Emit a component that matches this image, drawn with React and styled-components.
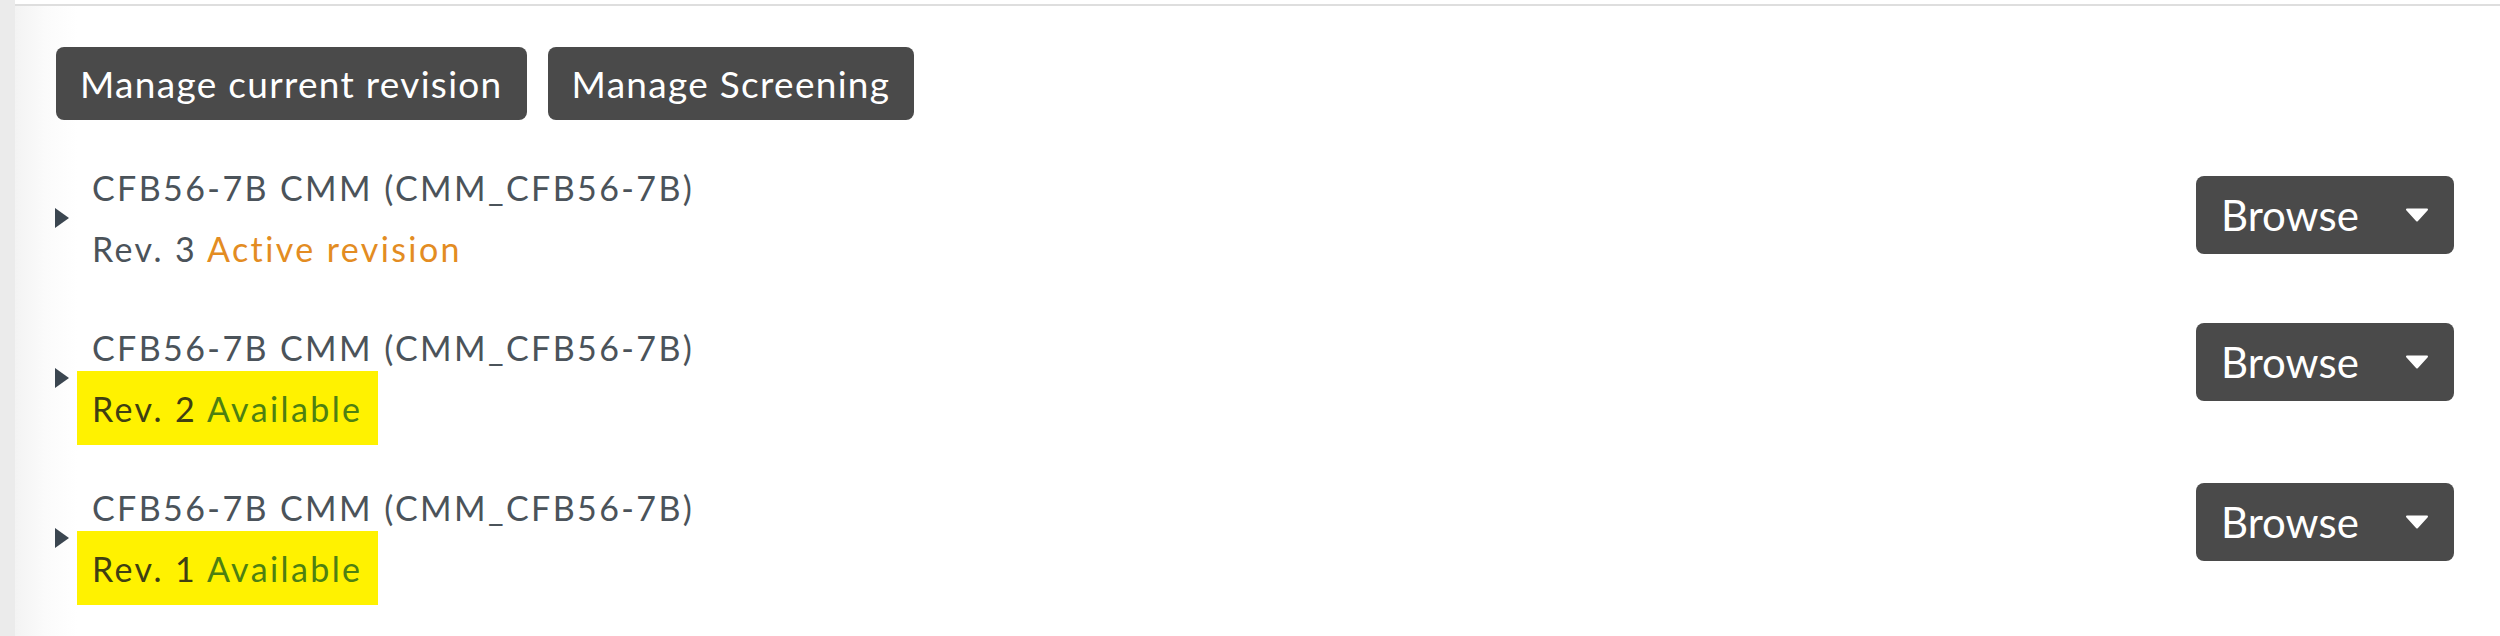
import React from 'react';
import styled, { createGlobalStyle } from 'styled-components';

const GlobalStyle = createGlobalStyle`
  html, body {
    margin: 0;
    padding: 0;
    background: #fff;
  }
  body {
    font-family: Lato, "Open Sans", Arial, sans-serif;
  }
`;

const Page = styled.div`
  display: flex;
  min-height: 100vh;
`;

const Rail = styled.div`
  width: 15px;
  flex-shrink: 0;
  background: #ebebeb;
`;

const Main = styled.main`
  flex: 1;
  margin-top: 4px;
  border-top: 2px solid #dedede;
  background: linear-gradient(to right, #f3f3f3 0, #fbfbfb 30px, #fff 62px);
`;

const Toolbar = styled.div`
  display: flex;
  gap: 21px;
  padding: 41px 0 0 41px;
`;

const DarkButton = styled.button`
  display: flex;
  align-items: center;
  height: 73px;
  padding: 0 24px;
  border: 0;
  border-radius: 8px;
  background: #4a4a4a;
  color: #fff;
  font-family: inherit;
  font-size: 37px;
  letter-spacing: 1.3px;
  cursor: pointer;
`;

const List = styled.div`
  display: flex;
  flex-direction: column;
  gap: 38px;
  margin-top: 37px;
`;

const Row = styled.div`
  display: flex;
  align-items: flex-start;
  padding: 0 46px 0 40px;
`;

const Caret = styled.span`
  align-self: center;
  width: 0;
  height: 0;
  margin-right: 23px;
  border-left: 14px solid #3b4650;
  border-top: 10px solid transparent;
  border-bottom: 10px solid transparent;
`;

const Info = styled.div`
  flex: 1;
  font-size: 34px;
  letter-spacing: 2.4px;
  line-height: 61px;
  color: #4b535a;
`;

const Title = styled.div``;

const RevLine = styled.div`
  width: fit-content;
  ${({ $highlight }) =>
    $highlight &&
    `
    background: #fff200;
    color: #403f12;
    padding: 7px 16px 6px 15px;
    margin: -7px 0 -6px -15px;
  `}
`;

const tones = {
  active: '#e38c22',
  available: '#4d8012',
};

const Status = styled.span`
  color: ${({ $tone }) => tones[$tone]};
`;

const BrowseButton = styled(DarkButton)`
  justify-content: space-between;
  width: 258px;
  height: 78px;
  margin-top: ${({ $top }) => $top}px;
  padding: 0 25px;
  font-size: 42px;
  letter-spacing: 0;
`;

const DownArrow = () => (
  <svg width="24" height="14" viewBox="0 0 24 14">
    <polygon
      points="2,1.5 22,1.5 12,12.5"
      fill="#fff"
      stroke="#fff"
      strokeWidth="2"
      strokeLinejoin="round"
    />
  </svg>
);

const revisions = [
  { rev: 3, status: 'Active revision', tone: 'active', highlight: false, top: 19 },
  { rev: 2, status: 'Available', tone: 'available', highlight: true, top: 6 },
  { rev: 1, status: 'Available', tone: 'available', highlight: true, top: 6 },
];

export default function App() {
  return (
    <>
      <GlobalStyle />
      <Page>
        <Rail />
        <Main>
          <Toolbar>
            <DarkButton>Manage current revision</DarkButton>
            <DarkButton>Manage Screening</DarkButton>
          </Toolbar>
          <List>
            {revisions.map((r) => (
              <Row key={r.rev}>
                <Caret />
                <Info>
                  <Title>CFB56-7B CMM (CMM_CFB56-7B)</Title>
                  <RevLine $highlight={r.highlight}>
                    Rev. {r.rev} <Status $tone={r.tone}>{r.status}</Status>
                  </RevLine>
                </Info>
                <BrowseButton $top={r.top}>
                  Browse
                  <DownArrow />
                </BrowseButton>
              </Row>
            ))}
          </List>
        </Main>
      </Page>
    </>
  );
}
